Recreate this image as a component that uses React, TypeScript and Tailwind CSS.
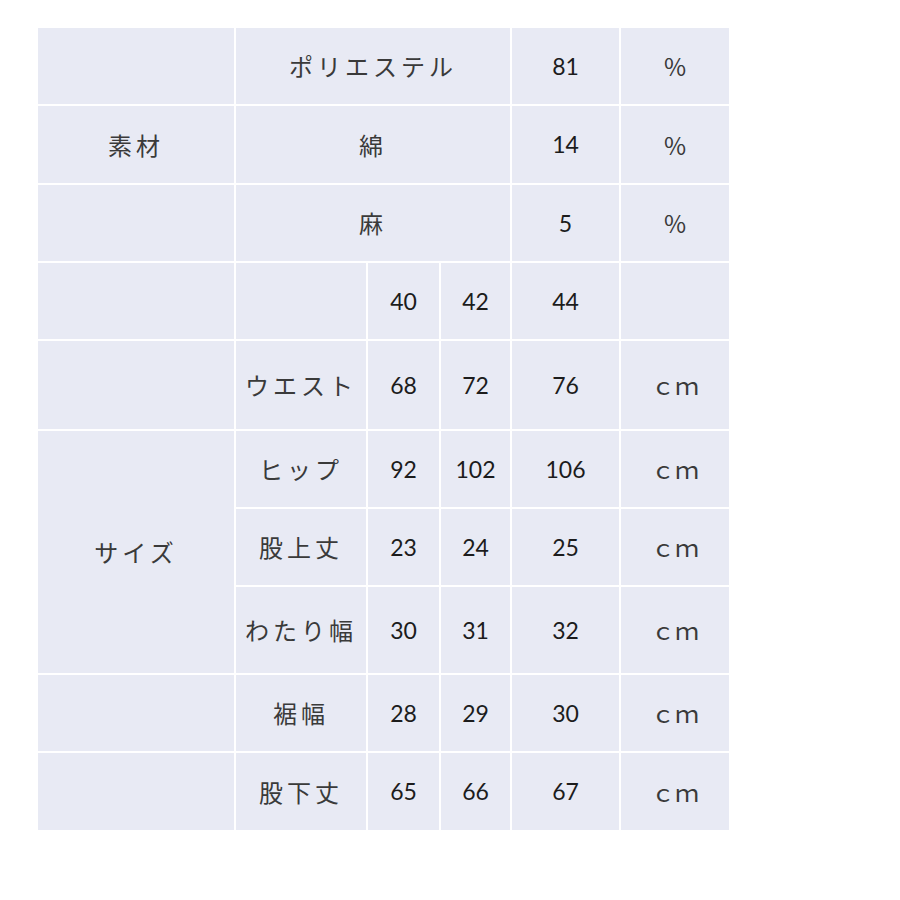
const jp = "font-['Noto_Sans_CJK_JP','Noto_Sans',sans-serif]";
const num = "font-['Lato','Liberation_Sans',sans-serif]";

type CellProps = {
  children?: React.ReactNode;
  className?: string;
  kind?: "jp" | "num";
};

const Cell = ({ children, className = "", kind = "jp" }: CellProps) => (
  <div
    className={`flex items-center justify-center bg-[#e8eaf4] ${
      kind === "jp"
        ? `${jp} text-[24px] tracking-[4px] text-[#3a3a3a]`
        : `${num} text-[23px] text-[#1c1c1c]`
    } ${className}`}
  >
    {children}
  </div>
);

const sizeRows = [
  { label: "ウエスト", v: ["68", "72", "76"] },
  { label: "ヒップ", v: ["92", "102", "106"] },
  { label: "股上丈", v: ["23", "24", "25"] },
  { label: "わたり幅", v: ["30", "31", "32"] },
  { label: "裾幅", v: ["28", "29", "30"] },
  { label: "股下丈", v: ["65", "66", "67"] },
];

export default function App() {
  return (
    <div className="min-h-[900px] w-[900px] bg-white pt-[28px] pl-[38px]">
      <div className="grid w-[691px] grid-cols-[196px_130px_71px_69px_107px_108px] grid-rows-[76px_77px_76px_76px_88px_76px_76px_86px_76px_77px] gap-[2px] bg-white">
        {/* 素材 */}
        <Cell />
        <Cell className="col-span-3">ポリエステル</Cell>
        <Cell kind="num">81</Cell>
        <Cell className="tracking-normal">%</Cell>

        <Cell>素材</Cell>
        <Cell className="col-span-3">綿</Cell>
        <Cell kind="num">14</Cell>
        <Cell className="tracking-normal">%</Cell>

        <Cell />
        <Cell className="col-span-3">麻</Cell>
        <Cell kind="num">5</Cell>
        <Cell className="tracking-normal">%</Cell>

        {/* サイズ header */}
        <Cell />
        <Cell />
        <Cell kind="num">40</Cell>
        <Cell kind="num">42</Cell>
        <Cell kind="num">44</Cell>
        <Cell />

        {sizeRows.map((r, i) => (
          <div key={r.label} className="contents">
            {i === 0 && <Cell />}
            {i === 1 && <Cell className="row-span-3">サイズ</Cell>}
            {i >= 4 && <Cell />}
            <Cell>{r.label}</Cell>
            {r.v.map((n, j) => (
              <Cell key={j} kind="num">
                {n}
              </Cell>
            ))}
            <Cell className="tracking-normal">ｃｍ</Cell>
          </div>
        ))}
      </div>
    </div>
  );
}
